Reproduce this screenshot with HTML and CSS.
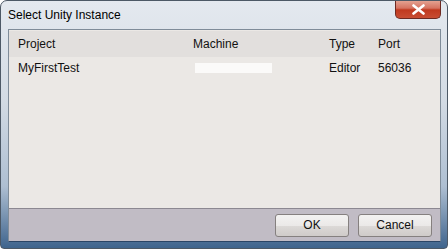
FILE: index.html
```html
<!DOCTYPE html>
<html lang="en">
<head>
  <meta charset="UTF-8" />
  <title>Select Unity Instance</title>
  <link rel="stylesheet" href="styles.css">
</head>
<body>
  <div class="window">
    <div class="titlebar">
      <span class="title">Select Unity Instance</span>
      <button class="close" title="Close">
        <svg width="13" height="11" viewBox="0 0 13 11">
          <path d="M1.5 1.5 L11.5 9.5 M11.5 1.5 L1.5 9.5" stroke="#fff" stroke-width="2.6" stroke-linecap="round"/>
        </svg>
      </button>
    </div>

    <div class="client">
      <div class="list">
        <div class="row head">
          <span class="col project">Project</span>
          <span class="col machine">Machine</span>
          <span class="col type">Type</span>
          <span class="col port">Port</span>
        </div>
        <div class="row">
          <span class="col project">MyFirstTest</span>
          <span class="col machine"><span class="hidden-name"></span></span>
          <span class="col type">Editor</span>
          <span class="col port">56036</span>
        </div>
      </div>

      <div class="buttons">
        <button class="btn">OK</button>
        <button class="btn">Cancel</button>
      </div>
    </div>
  </div>
</body>
</html>
```

FILE: styles.css
```css
html, body {
  margin: 0;
  padding: 0;
  background: #ffffff;
}
body {
  font-family: "Liberation Sans", Arial, sans-serif;
  font-size: 12px;
  color: #111;
}
.window {
  width: 448px;
  height: 249px;
  box-sizing: border-box;
  border: 1px solid #4d5966;
  border-radius: 7px 7px 4px 4px;
  background: linear-gradient(to bottom, #e4e9ef 0%, #d3dbe4 40%, #aebfd2 75%, #3f648d 100%);
  display: flex;
  flex-direction: column;
  overflow: hidden;
}
.titlebar {
  height: 28px;
  display: flex;
  align-items: flex-start;
  justify-content: space-between;
  padding-left: 7px;
}
.title {
  margin-top: 7px;
  font-size: 12px;
  color: #000;
}
.close {
  width: 46px;
  height: 19px;
  margin-top: -1px;
  margin-right: 6px;
  padding: 0;
  border: 1px solid #6d2a22;
  border-top: none;
  border-radius: 0 0 5px 5px;
  background: linear-gradient(to bottom, #e6a897 0%, #d57361 45%, #c0391f 55%, #c84d33 100%);
  display: flex;
  align-items: center;
  justify-content: center;
}
.client {
  flex: 1;
  margin: 0 6px 6px 7px;
  border: 1px solid #7f8c99;
  border-bottom-color: #2a4566;
  display: flex;
  flex-direction: column;
  background: #c1bcc5;
}
.list {
  height: 178px;
  background: #ebe8e5;
  border-bottom: 1px solid #8c8891;
}
.row {
  height: 22px;
  display: flex;
  align-items: center;
}
.row.head {
  height: 26px;
  margin-top: 1px;
  background: #e2dfdd;
}
.col {
  display: block;
  box-sizing: border-box;
}
.project { width: 184px; padding-left: 9px; }
.machine { width: 136px; }
.type { width: 49px; }
.port { width: 50px; }
.hidden-name {
  display: block;
  width: 77px;
  height: 10px;
  margin-left: 2px;
  background: #fbfaf9;
}
.buttons {
  flex: 1;
  display: flex;
  justify-content: flex-end;
  align-items: center;
  gap: 9px;
  padding-right: 8px;
}
.btn {
  width: 74px;
  height: 23px;
  font-family: "Liberation Sans", Arial, sans-serif;
  font-size: 12px;
  color: #111;
  border: 1px solid #85807f;
  border-radius: 3px;
  background: linear-gradient(to bottom, #f3f2f1 0%, #ebe9e8 50%, #dcd9d7 52%, #cfcbc9 100%);
  padding: 0;
}
```
